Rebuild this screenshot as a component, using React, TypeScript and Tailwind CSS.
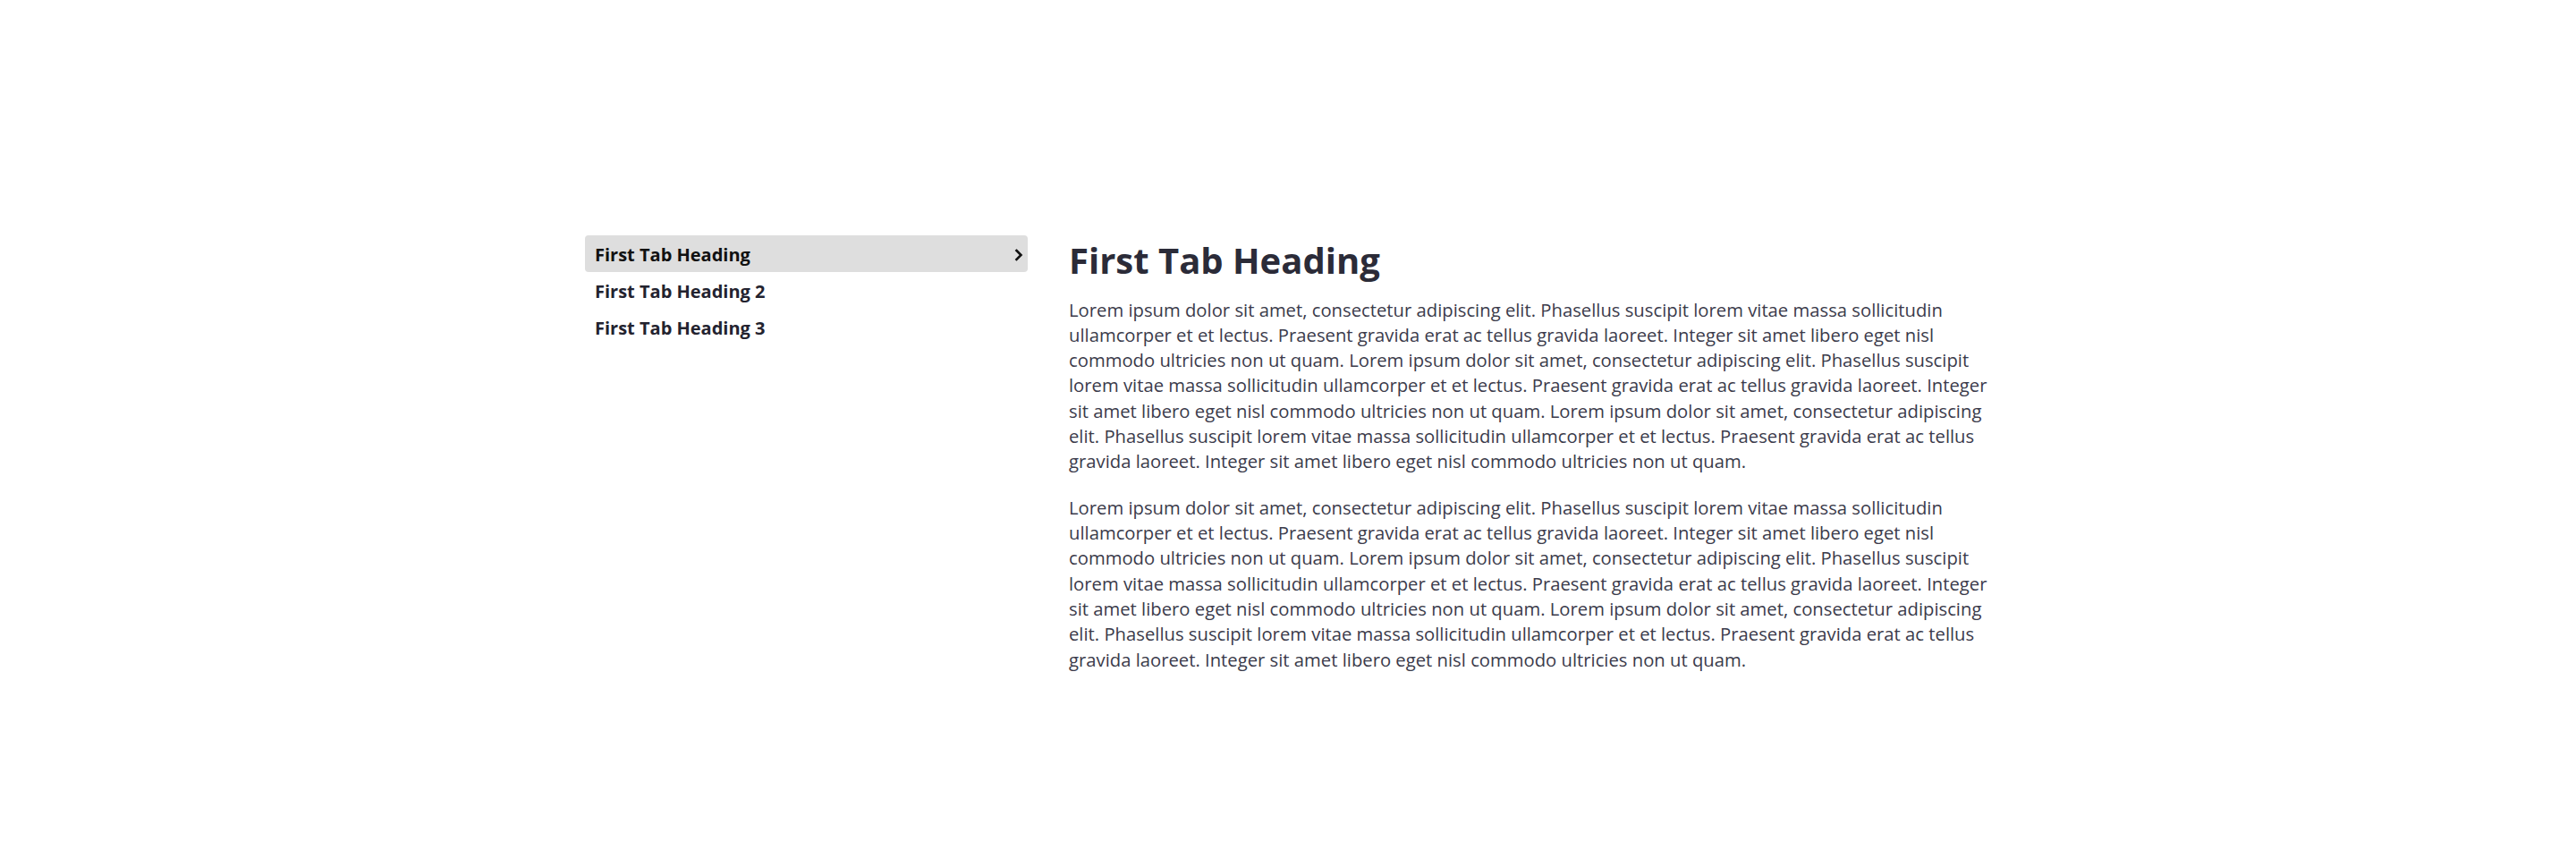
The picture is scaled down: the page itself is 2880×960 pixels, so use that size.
import React from "react";

const LINES = [
  "Lorem ipsum dolor sit amet, consectetur adipiscing elit. Phasellus suscipit lorem vitae massa sollicitudin",
  "ullamcorper et et lectus. Praesent gravida erat ac tellus gravida laoreet. Integer sit amet libero eget nisl",
  "commodo ultricies non ut quam. Lorem ipsum dolor sit amet, consectetur adipiscing elit. Phasellus suscipit",
  "lorem vitae massa sollicitudin ullamcorper et et lectus. Praesent gravida erat ac tellus gravida laoreet. Integer",
  "sit amet libero eget nisl commodo ultricies non ut quam. Lorem ipsum dolor sit amet, consectetur adipiscing",
  "elit. Phasellus suscipit lorem vitae massa sollicitudin ullamcorper et et lectus. Praesent gravida erat ac tellus",
  "gravida laoreet. Integer sit amet libero eget nisl commodo ultricies non ut quam.",
];

function Paragraph({ className = "" }: { className?: string }) {
  return (
    <p className={"text-[20.25px] leading-[28.33px] text-[#3b3b4b] " + className}>
      {LINES.map((l, i) => (
        <span key={i} className="block whitespace-nowrap">
          {l}
        </span>
      ))}
    </p>
  );
}

function Chevron() {
  return (
    <svg width="10" height="14" viewBox="0 0 10 14" fill="none" aria-hidden="true">
      <path d="M2.5 2 L7.5 7 L2.5 12" stroke="#111111" strokeWidth="2.6" strokeLinecap="square" strokeLinejoin="miter" />
    </svg>
  );
}

export default function App() {
  const tabs = ["First Tab Heading", "First Tab Heading 2", "First Tab Heading 3"];
  return (
    <div className="min-h-screen bg-white font-['Open_Sans',sans-serif]">
      <div className="mx-auto flex w-[1572px] gap-[46px] pt-[263px]">
        <nav className="flex w-[495px] shrink-0 flex-col">
          {tabs.map((t, i) => (
            <button
              key={t}
              className={
                "flex h-[41px] items-center justify-between rounded-[4px] pl-[11px] pr-[5px] pt-[3px] text-left text-[20px] font-bold " +
                (i === 0 ? "bg-[#dedede] text-[#111111]" : "bg-transparent text-[#23232f]")
              }
            >
              <span>{t}</span>
              {i === 0 && <Chevron />}
            </button>
          ))}
        </nav>
        <div className="w-[1030px] pt-[4px]">
          <h1 className="text-[40px] font-bold leading-[48px] text-[#2b2b38]">First Tab Heading</h1>
          <Paragraph className="mt-[16.5px]" />
          <Paragraph className="mt-[23px]" />
        </div>
      </div>
    </div>
  );
}
